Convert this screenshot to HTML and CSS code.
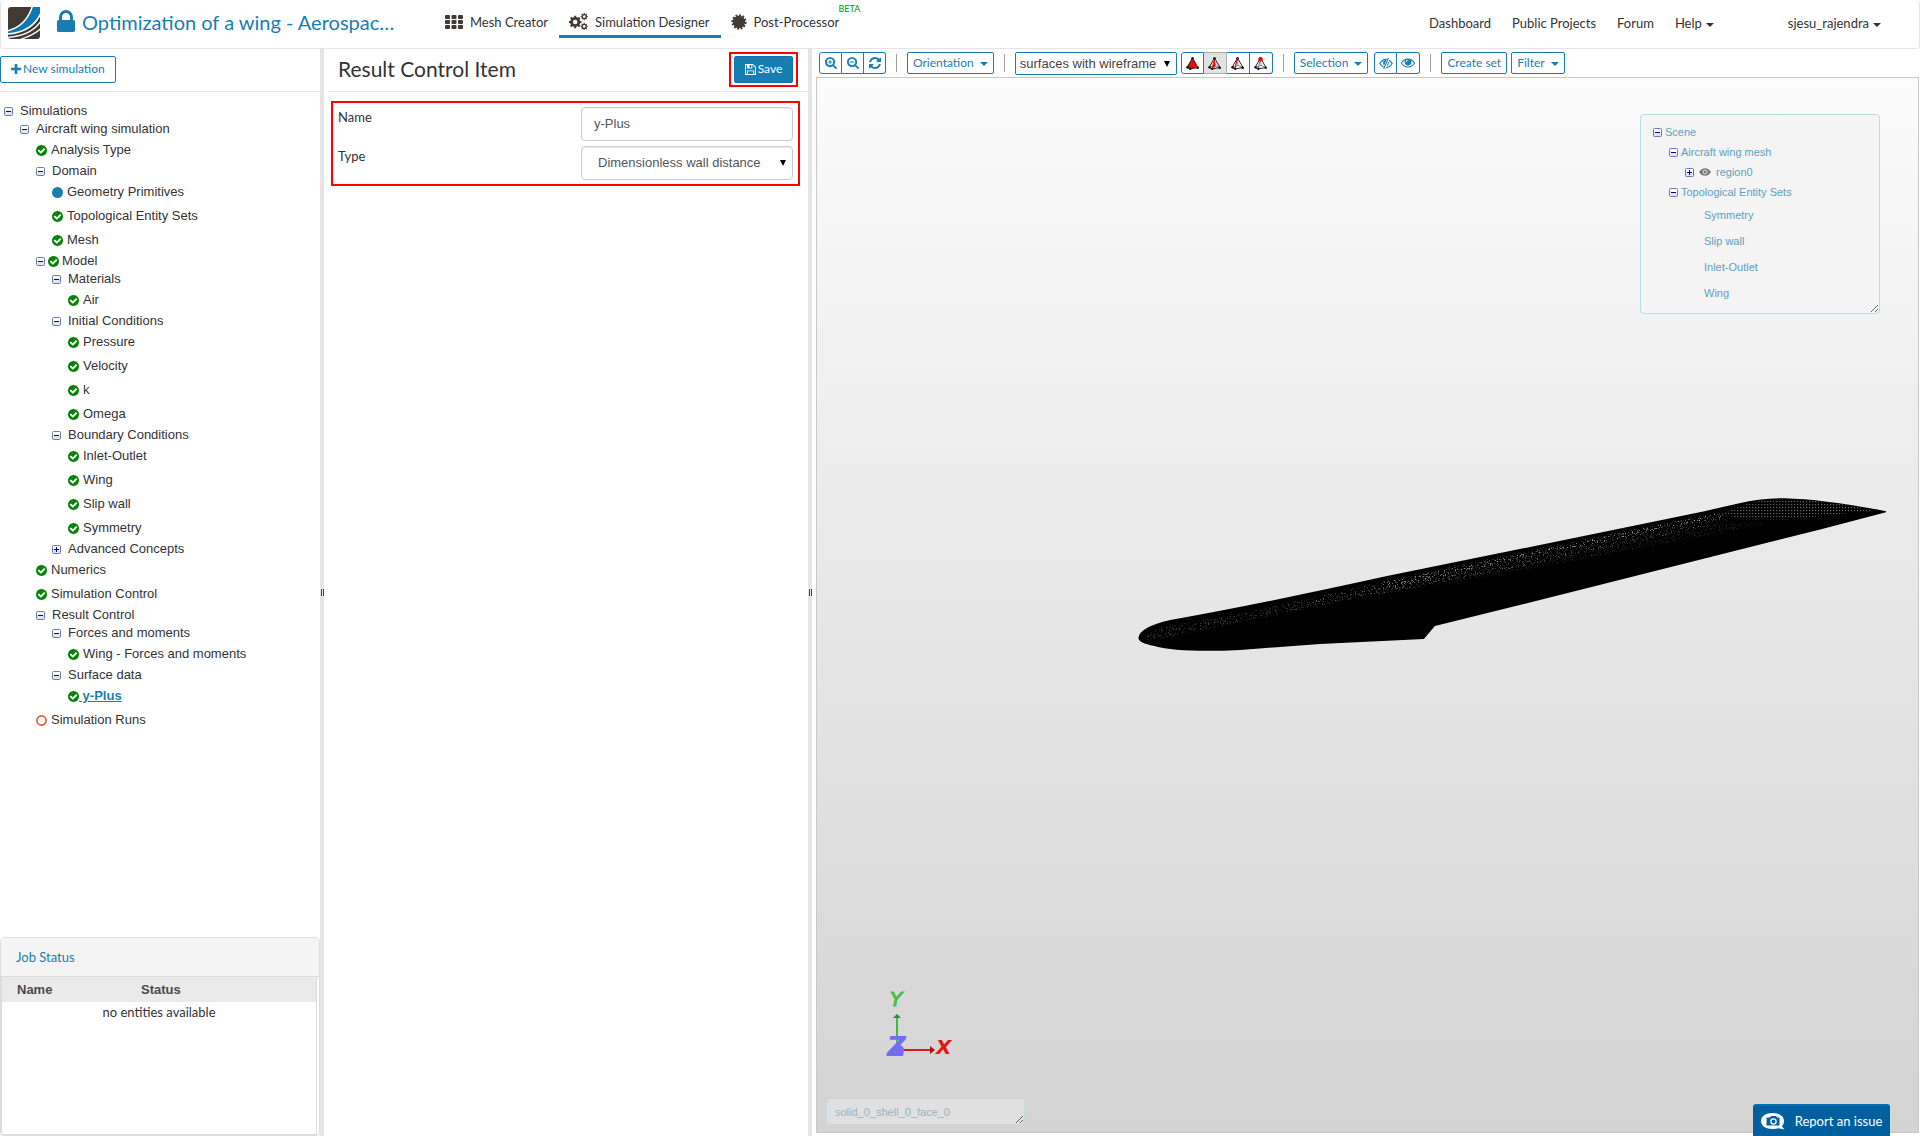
FILE: index.html
```html
<!DOCTYPE html>
<html lang="en">
<head>
<meta charset="utf-8">
<meta name="viewport" content="width=device-width, initial-scale=1">
<title>Simulation Designer</title>
<link rel="stylesheet" href="styles.css">
</head>
<body>
<svg class="defs" aria-hidden="true">
  <symbol id="plus" viewBox="192 128 1408 1408"><path d="M1600 736v192q0 40-28 68t-68 28h-416v416q0 40-28 68t-68 28h-192q-40 0-68-28t-28-68v-416h-416q-40 0-68-28t-28-68v-192q0-40 28-68t68-28h416v-416q0-40 28-68t68-28h192q40 0 68 28t28 68v416h416q40 0 68 28t28 68z"/></symbol>
  <symbol id="lock" viewBox="320 128 1152 1408"><path d="M640 768h512v-192q0-106-75-181t-181-75-181 75-75 181v192zm832 96v576q0 40-28 68t-68 28h-960q-40 0-68-28t-28-68v-576q0-40 28-68t68-28h32v-192q0-184 132-316t316-132 316 132 132 316v192h32q40 0 68 28t28 68z"/></symbol>
  <symbol id="zoom-in" viewBox="64 128 1664 1664"><path d="M1088 800v64q0 13-9.500 22.500t-22.500 9.500h-224v224q0 13-9.500 22.500t-22.500 9.500h-64q-13 0-22.500-9.500t-9.500-22.500v-224h-224q-13 0-22.500-9.500t-9.500-22.500v-64q0-13 9.500-22.500t22.500-9.500h224v-224q0-13 9.500-22.500t22.500-9.500h64q13 0 22.500 9.500t9.500 22.500v224h224q13 0 22.500 9.500t9.500 22.500zm128 32q0-185-131.500-316.500t-316.500-131.500-316.500 131.500-131.500 316.500 131.500 316.500 316.500 131.500 316.500-131.500 131.500-316.500zm512 832q0 53-37.500 90.500t-90.500 37.500q-54 0-90-38l-343-342q-179 124-399 124-143 0-273.500-55.500t-225-150-150-225-55.500-273.500 55.500-273.500 150-225 225-150 273.500-55.500 273.500 55.500 225 150 150 225 55.500 273.500q0 220-124 399l343 343q37 37 37 90z"/></symbol>
  <symbol id="zoom-out" viewBox="64 128 1664 1664"><path d="M1088 800v64q0 13-9.500 22.500t-22.500 9.500h-576q-13 0-22.500-9.500t-9.500-22.500v-64q0-13 9.500-22.500t22.500-9.500h576q13 0 22.500 9.500t9.500 22.500zm128 32q0-185-131.500-316.500t-316.500-131.500-316.500 131.500-131.500 316.500 131.500 316.500 316.500 131.500 316.500-131.500 131.500-316.500zm512 832q0 53-37.500 90.500t-90.500 37.500q-54 0-90-38l-343-342q-179 124-399 124-143 0-273.500-55.500t-225-150-150-225-55.500-273.500 55.500-273.500 150-225 225-150 273.500-55.500 273.500 55.500 225 150 150 225 55.500 273.500q0 220-124 399l343 343q37 37 37 90z"/></symbol>
  <symbol id="refresh" viewBox="128 128 1536 1536"><path d="M1639 1056q0 5-1 7-64 268-268 434.500t-478 166.500q-146 0-282.500-55t-243.500-157l-129 129q-19 19-45 19t-45-19-19-45v-448q0-26 19-45t45-19h448q26 0 45 19t19 45-19 45l-137 137q71 66 161 102t187 36q134 0 250-65t186-179q11-17 53-117 8-23 30-23h192q13 0 22.500 9.500t9.500 22.500zm25-800v448q0 26-19 45t-45 19h-448q-26 0-45-19t-19-45 19-45l138-138q-148-137-349-137-134 0-250 65t-186 179q-11 17-53 117-8 23-30 23h-199q-13 0-22.500-9.500t-9.500-22.500v-7q65-268 270-434.500t480-166.500q146 0 284 55.500t245 156.500l130-129q19-19 45-19t45 19 19 45z"/></symbol>
  <symbol id="check" viewBox="128 128 1536 1536"><path d="M1412 734q0-28-18-46l-91-90q-19-19-45-19t-45 19l-408 407-226-226q-19-19-45-19t-45 19l-91 90q-18 18-18 46 0 27 18 45l362 362q19 19 45 19 27 0 46-19l543-543q18-18 18-45zm252 162q0 209-103 385.500t-279.500 279.500-385.500 103-385.500-103-279.500-279.500-103-385.500 103-385.500 279.500-279.500 385.500-103 385.500 103 279.500 279.500 103 385.500z"/></symbol>
  <symbol id="dot" viewBox="0 0 12 12"><circle cx="6" cy="6" r="6"/></symbol>
  <symbol id="ring" viewBox="0 0 12 12"><circle cx="6" cy="6" r="5" fill="none" stroke="currentColor" stroke-width="1.800"/></symbol>
  <symbol id="eye" viewBox="0 384 1792 1152"><path d="M1664 960q-152-236-381-353 61 104 61 225 0 185-131.500 316.500t-316.500 131.500-316.500-131.500-131.500-316.500q0-121 61-225-229 117-381 353 133 205 333.500 326.500t434.500 121.500 434.500-121.500 333.500-326.500zm-720-384q0-20-14-34t-34-14q-125 0-214.500 89.500t-89.500 214.500q0 20 14 34t34 14 34-14 14-34q0-86 61-147t147-61q20 0 34-14t14-34zm848 384q0 34-20 69-140 230-376.500 368.500t-499.500 138.500-499.500-139-376.500-368q-20-35-20-69t20-69q140-229 376.500-368t499.500-139 499.500 139 376.500 368q20 35 20 69z"/></symbol>
  <symbol id="eye-solid" viewBox="0 0 14 9"><path d="M0 4.500Q3 0 7 0T14 4.500Q11 9 7 9T0 4.500Z"/><circle cx="7" cy="4.500" r="2.300" fill="none" stroke="#f4f4f4"/></symbol>
  <symbol id="eye-off" viewBox="0 0 14 11"><path d="M.8 5.500Q3.500 1.400 7 1.400T13.200 5.500Q10.500 9.600 7 9.600T.8 5.500Z" fill="none" stroke="currentColor" stroke-width="1.200"/><circle cx="7" cy="5" r="2.900"/><path d="M9.700 0 5 11" stroke="#fff" stroke-width="2.600"/><path d="M9.400 0 4.700 11" stroke="currentColor" stroke-width="1.100"/></symbol>
  <symbol id="save" viewBox="128 128 1536 1536"><path d="M512 1536h768v-384h-768v384zm896 0h128v-896q0-14-10-38.500t-20-34.500l-281-281q-10-10-34-20t-39-10v416q0 40-28 68t-68 28h-576q-40 0-68-28t-28-68v-416h-128v1280h128v-416q0-40 28-68t68-28h832q40 0 68 28t28 68v416zm-384-928v-320q0-13-9.500-22.500t-22.500-9.500h-192q-13 0-22.500 9.500t-9.500 22.500v320q0 13 9.500 22.500t22.500 9.500h192q13 0 22.500-9.500t9.500-22.500zm640 32v928q0 40-28 68t-68 28h-1344q-40 0-68-28t-28-68v-1344q0-40 28-68t68-28h928q40 0 88 20t76 48l280 280q28 28 48 76t20 88z"/></symbol>
  <symbol id="grid" viewBox="0 0 18 14"><g><rect width="5" height="4" rx="1"/><rect x="6.500" width="5" height="4" rx="1"/><rect x="13" width="5" height="4" rx="1"/><rect y="5" width="5" height="4" rx="1"/><rect x="6.500" y="5" width="5" height="4" rx="1"/><rect x="13" y="5" width="5" height="4" rx="1"/><rect y="10" width="5" height="4" rx="1"/><rect x="6.500" y="10" width="5" height="4" rx="1"/><rect x="13" y="10" width="5" height="4" rx="1"/></g></symbol>
  <symbol id="cogs" viewBox="0 0 19 17"><g fill="none" stroke="currentColor"><circle cx="6.200" cy="9" r="3.700" stroke-width="2.800"/><circle cx="6.200" cy="9" r="5.400" stroke-width="1.700" pathLength="16" stroke-dasharray="1 1" stroke-dashoffset=".5"/><circle cx="15.200" cy="3.600" r="2" stroke-width="1.400"/><circle cx="15.200" cy="3.600" r="3" stroke-width="1.200" pathLength="16" stroke-dasharray="1 1" stroke-dashoffset=".5"/><circle cx="15.200" cy="13.400" r="2" stroke-width="1.400"/><circle cx="15.200" cy="13.400" r="3" stroke-width="1.200" pathLength="16" stroke-dasharray="1 1" stroke-dashoffset=".5"/></g></symbol>
  <symbol id="burst" viewBox="0 0 16 16"><circle cx="8" cy="8" r="6.200"/><circle cx="8" cy="8" r="6.700" fill="none" stroke="currentColor" stroke-width="1.900" pathLength="24" stroke-dasharray="1.100 .9"/></symbol>
  <symbol id="tet" viewBox="0 0 13 13"><path d="M6.500 1 1 10.500 4 12 12 10.500Z" fill="none" stroke="#111" stroke-width=".9"/><path d="M6.500 1 4 12M1 10.500 7 8.500 12 10.500M6.500 1 7 8.500" fill="none" stroke="#555" stroke-width=".7"/><circle cx="1.600" cy="10.300" r="1.300"/><circle cx="4.300" cy="11.700" r="1.200"/><circle cx="11.700" cy="10.700" r="1.300"/><circle cx="6.500" cy="1.300" r="1.200"/></symbol>
  <symbol id="minus-box" viewBox="0 0 9 9"><rect x=".5" y=".5" width="8" height="8" rx="1" fill="#fff" stroke="#6b79b5"/><path d="M1 5h7v3H1z" fill="#e3e3ea"/><path d="M2 4h5v1H2z" fill="#00009c"/></symbol>
  <symbol id="plus-box" viewBox="0 0 9 9"><rect x=".5" y=".5" width="8" height="8" rx="1" fill="#fff" stroke="#6b79b5"/><path d="M1 5h7v3H1z" fill="#e3e3ea"/><path d="M2 4h5v1H2zM4 2h1v5H4z" fill="#00009c"/></symbol>
</svg>

<header class="topbar">
  <a class="logo" href="#" aria-label="Home">
    <svg viewBox="0 0 32 32"><clipPath id="logo-clip"><path d="M3 0H32V29Q32 32 29 32H3Q0 32 0 29V3Q0 0 3 0Z"/></clipPath><g clip-path="url(#logo-clip)"><path fill="#403934" d="M0 0h32v32H0z"/><path d="M24 0Q18 20 0 24V27Q24 25 33 6V0Z" fill="#0f78b4"/><g fill="none" stroke="#fff"><path d="M24.500-1Q18 19.500-1 24" stroke-width="1.500"/><path d="M33 6Q24 25.500-1 27" stroke-width="1.600"/><path d="M33 14Q23 29-1 30.500" stroke-width="1.300"/><path d="M33 21.500Q26 28 12 32.500" stroke-width="1.300"/></g></g></svg>
  </a>
  <a class="project" href="#"><svg class="lock"><use href="#lock"/></svg><span>Optimization of a wing - Aerospac…</span></a>
  <nav class="modes" aria-label="Workbench">
    <a href="#"><svg class="i-grid"><use href="#grid"/></svg>Mesh Creator</a>
    <a class="active" href="#" aria-current="page"><svg class="i-cogs"><use href="#cogs"/></svg>Simulation Designer</a>
    <a href="#"><svg class="i-burst"><use href="#burst"/></svg>Post-Processor<span class="beta">BETA</span></a>
  </nav>
  <nav class="links" aria-label="Site">
    <a href="#">Dashboard</a>
    <a href="#">Public Projects</a>
    <a href="#">Forum</a>
    <a href="#">Help<i class="caret"></i></a>
    <a class="user" href="#">sjesu_rajendra<i class="caret"></i></a>
  </nav>
</header>

<main class="workspace">
  <aside class="sidebar">
    <div class="bar"><button class="btn new" type="button"><svg class="i-plus"><use href="#plus"/></svg>New simulation</button></div>
    <ul class="tree">
      <li><div class="row"><svg class="tog"><use href="#minus-box"/></svg>Simulations</div>
        <ul>
          <li><div class="row"><svg class="tog"><use href="#minus-box"/></svg>Aircraft wing simulation</div>
            <ul>
              <li class="leaf"><svg class="st"><use href="#check"/></svg>Analysis Type</li>
              <li><div class="row"><svg class="tog"><use href="#minus-box"/></svg>Domain</div>
                <ul>
                  <li class="leaf"><svg class="st blue"><use href="#dot"/></svg>Geometry Primitives</li>
                  <li class="leaf"><svg class="st"><use href="#check"/></svg>Topological Entity Sets</li>
                  <li class="leaf"><svg class="st"><use href="#check"/></svg>Mesh</li>
                </ul></li>
              <li><div class="row model"><svg class="tog"><use href="#minus-box"/></svg><svg class="st"><use href="#check"/></svg>Model</div>
                <ul>
                  <li><div class="row"><svg class="tog"><use href="#minus-box"/></svg>Materials</div>
                    <ul><li class="leaf"><svg class="st"><use href="#check"/></svg>Air</li></ul></li>
                  <li><div class="row"><svg class="tog"><use href="#minus-box"/></svg>Initial Conditions</div>
                    <ul>
                      <li class="leaf"><svg class="st"><use href="#check"/></svg>Pressure</li>
                      <li class="leaf"><svg class="st"><use href="#check"/></svg>Velocity</li>
                      <li class="leaf"><svg class="st"><use href="#check"/></svg>k</li>
                      <li class="leaf"><svg class="st"><use href="#check"/></svg>Omega</li>
                    </ul></li>
                  <li><div class="row"><svg class="tog"><use href="#minus-box"/></svg>Boundary Conditions</div>
                    <ul>
                      <li class="leaf"><svg class="st"><use href="#check"/></svg>Inlet-Outlet</li>
                      <li class="leaf"><svg class="st"><use href="#check"/></svg>Wing</li>
                      <li class="leaf"><svg class="st"><use href="#check"/></svg>Slip wall</li>
                      <li class="leaf"><svg class="st"><use href="#check"/></svg>Symmetry</li>
                    </ul></li>
                  <li><div class="row"><svg class="tog"><use href="#plus-box"/></svg>Advanced Concepts</div></li>
                </ul></li>
              <li class="leaf"><svg class="st"><use href="#check"/></svg>Numerics</li>
              <li class="leaf"><svg class="st"><use href="#check"/></svg>Simulation Control</li>
              <li><div class="row"><svg class="tog"><use href="#minus-box"/></svg>Result Control</div>
                <ul>
                  <li><div class="row"><svg class="tog"><use href="#minus-box"/></svg>Forces and moments</div>
                    <ul><li class="leaf"><svg class="st"><use href="#check"/></svg>Wing - Forces and moments</li></ul></li>
                  <li><div class="row"><svg class="tog"><use href="#minus-box"/></svg>Surface data</div>
                    <ul><li class="leaf selected"><svg class="st"><use href="#check"/></svg><a class="current" href="#">&nbsp;y-Plus</a></li></ul></li>
                </ul></li>
              <li class="leaf"><svg class="st orange"><use href="#ring"/></svg>Simulation Runs</li>
            </ul></li>
        </ul></li>
    </ul>
    <section class="jobs">
      <h2>Job Status</h2>
      <div class="jobs-body">
        <table>
          <thead><tr><th>Name</th><th>Status</th></tr></thead>
          <tbody><tr><td colspan="2">no entities available</td></tr></tbody>
        </table>
      </div>
    </section>
  </aside>
  <div class="splitter"><i></i></div>

  <section class="panel">
    <div class="bar title">
      <h1>Result Control Item</h1>
      <div class="mark"><button class="save" type="submit" form="item"><svg class="i-save"><use href="#save"/></svg>Save</button></div>
    </div>
    <form class="mark fields" id="item">
      <label for="name">Name</label>
      <input id="name" type="text" value="y-Plus">
      <label for="type">Type</label>
      <div class="pick"><select id="type"><option>Dimensionless wall distance</option></select></div>
    </form>
  </section>
  <div class="splitter"><i></i></div>

  <section class="viewer">
    <div class="toolbar">
      <div class="group">
        <button type="button" aria-label="Zoom in"><svg><use href="#zoom-in"/></svg></button>
        <button type="button" aria-label="Zoom out"><svg><use href="#zoom-out"/></svg></button>
        <button type="button" aria-label="Reset view"><svg><use href="#refresh"/></svg></button>
      </div>
      <span class="sep"></span>
      <button class="btn small" type="button">Orientation<i class="caret"></i></button>
      <span class="sep"></span>
      <div class="modeset">
        <div class="pick render"><select aria-label="Render mode"><option>surfaces with wireframe</option></select></div>
        <div class="group tets">
          <button type="button" aria-label="Pick volumes"><svg viewBox="0 0 13 13"><path d="M6.500 1 1 10.500 4 12 12 10.500Z" fill="red"/><use href="#tet"/><path d="M6.500 2 4.500 11.500 11.500 10.500Z" fill="red"/></svg></button>
          <button class="on" type="button" aria-label="Pick faces"><svg viewBox="0 0 13 13"><use href="#tet"/><path d="M6.500 1.500 4 12 7.500 9.500Z" fill="red"/></svg></button>
          <button type="button" aria-label="Pick edges"><svg viewBox="0 0 13 13"><use href="#tet"/><path d="M6.500 1 4 11" stroke="red" fill="none"/></svg></button>
          <button type="button" aria-label="Pick nodes"><svg viewBox="0 0 13 13"><use href="#tet"/><circle cx="6.500" cy="2.200" r="2.200" fill="red"/></svg></button>
        </div>
      </div>
      <span class="sep"></span>
      <div class="modeset wide">
        <button class="btn small" type="button">Selection<i class="caret"></i></button>
        <div class="group eyes">
          <button type="button" aria-label="Hide selection"><svg><use href="#eye-off"/></svg></button>
          <button type="button" aria-label="Show selection"><svg><use href="#eye"/></svg></button>
        </div>
      </div>
      <span class="sep"></span>
      <div class="modeset">
        <button class="btn small" type="button">Create set</button>
        <button class="btn small" type="button">Filter<i class="caret"></i></button>
      </div>
    </div>

    <div class="canvas">
      <svg class="wing" viewBox="816 78 1103 1056" role="img" aria-label="Wing mesh">
        <defs>
          <filter id="grain" x="0" y="0" width="1" height="1"><feTurbulence type="fractalNoise" baseFrequency=".85" numOctaves="2" seed="4"/><feColorMatrix values="0 0 0 0 .46  0 0 0 0 .54  0 0 0 0 .55  5 0 0 0 -2.700"/><feComposite in2="SourceGraphic" operator="in"/></filter>
          <pattern id="mesh" width="3" height="3" patternUnits="userSpaceOnUse"><path d="M1 1h1v1H1z" fill="#8b9b97"/></pattern>
        </defs>
        <path d="M1138 639Q1139 628 1170 621Q1260 605 1387 577L1520 550L1705 512L1740 504Q1760 499 1785 499Q1825 500 1887 512V513L1822 530L1520 606L1435 627L1424 640L1320 645L1240 651Q1180 654 1154 647Q1138 644 1138 639Z"/>
        <path filter="url(#grain)" opacity=".35" d="M1141 639L1160 628L1240 615L1380 583L1520 553L1715 514L1730 522L1520 568L1380 595L1250 621L1150 642Z"/>
        <path filter="url(#grain)" opacity=".6" d="M1380 584L1520 555L1722 513L1728 517L1520 560L1385 590Z"/>
        <path filter="url(#grain)" opacity=".2" d="M1300 604L1520 562L1720 524L1770 524L1520 572L1340 602Z"/>
        <path fill="url(#mesh)" d="M1725 514Q1748 502 1772 500Q1820 499 1874 511L1820 517L1790 520H1738Z"/>
      </svg>

      <svg class="axes" viewBox="0 0 70 80" role="img" aria-label="Axes">
        <path d="M14 32V60" stroke="#3fb83f" stroke-width="2"/><path d="m14 29-4 4h8z" fill="#36863c"/>
        <path d="M17 65H48" stroke="#e01818" stroke-width="2"/><path d="m52 65-5-4v8z" fill="#a81414"/>
        <circle cx="16" cy="65" r="5" fill="#6f6ff0"/>
        <text x="7" y="21" class="ax y">Y</text><text x="53" y="69" class="ax x">X</text><text x="4" y="71" class="ax z">Z</text>
      </svg>

      <div class="scene">
        <ul>
          <li><svg class="tog"><use href="#minus-box"/></svg>Scene</li>
          <li class="d1"><svg class="tog"><use href="#minus-box"/></svg>Aircraft wing mesh</li>
          <li class="d2"><svg class="tog"><use href="#plus-box"/></svg><svg class="eye"><use href="#eye-solid"/></svg>region0</li>
          <li class="d1"><svg class="tog"><use href="#minus-box"/></svg>Topological Entity Sets</li>
          <li class="set">Symmetry</li>
          <li class="set">Slip wall</li>
          <li class="set">Inlet-Outlet</li>
          <li class="set">Wing</li>
        </ul>
      </div>
      <textarea class="picked" aria-label="Picked entity" readonly>solid_0_shell_0_face_0</textarea>
    </div>
  </section>
</main>

<button class="report" type="button">
  <svg viewBox="0 0 24 17"><path d="M11.500 0C18 0 23 3.200 23 8c0 2.200-.9 4-2.200 5.300L23.500 16.500 17.500 15.300C15.700 15.900 13.700 16 11.500 16 5 16 0 13 0 8S5 0 11.500 0Z" fill="#fff"/><path d="M5.500 4.500H9L10 3h5l1 1.500h2.500v8h-13z" fill="#00609f"/><circle cx="12.500" cy="8.500" r="2.600" fill="none" stroke="#fff" stroke-width="1.300"/></svg>
  Report an issue
</button>
</body>
</html>
```
FILE: styles.css
```css
:root {
  --blue: #187eb1;
  --ink: #333;
  --line: #e5e5e5;
  --sans: "Liberation Sans", Arial, sans-serif;
}

* { box-sizing: border-box; }

body {
  display: flex;
  flex-direction: column;
  min-height: 100vh;
  margin: 0;
  background: #fff;
  color: var(--ink);
  font: 13px/20px Lato, sans-serif;
}

a { color: inherit; text-decoration: none; }
ul { margin: 0; padding: 0; list-style: none; }
h1, h2 { margin: 0; font-weight: 400; }
svg { display: block; flex: none; fill: currentColor; }
button, input, select, textarea { margin: 0; font: inherit; }
button { display: flex; align-items: center; justify-content: center; cursor: pointer; }
.defs { position: absolute; width: 0; height: 0; }

.caret {
  flex: none;
  display: inline-block;
  margin-left: 4px;
  border: 4px solid transparent;
  border-top-color: currentColor;
  border-bottom: 0;
  vertical-align: middle;
}

/* Top bar */
.topbar {
  display: flex;
  align-items: center;
  height: 49px;
  padding: 0 38px 2px 7px;
  border: 1px solid var(--line);
  border-top: 0;
  border-radius: 4px;
}
.logo svg { width: 32px; height: 32px; }
.project {
  display: flex;
  align-items: center;
  gap: 7px;
  width: 388px;
  margin-left: 17px;
  color: var(--blue);
  font-size: 20px;
  line-height: 24px;
}
.project span { padding-bottom: 2px; }
.lock { width: 18px; height: 22px; margin-bottom: 4px; }
.modes { display: flex; }
.modes a {
  position: relative;
  display: flex;
  align-items: center;
  gap: 7px;
  height: 29px;
  padding: 0 11px 0 10px;
  border-bottom: 3px solid transparent;
}
.modes a:first-child { padding-left: 0; }
.modes .active { border-color: var(--blue); }
.modes svg { color: #403934; }
.i-grid { width: 18px; height: 14px; }
.i-cogs { width: 19px; height: 17px; }
.i-burst { width: 16px; height: 16px; }
.beta {
  position: absolute;
  top: -6px;
  right: -10px;
  color: #090;
  font-size: 9px;
  line-height: 12px;
}
.links { display: flex; gap: 21px; margin-left: auto; }
.links .user { margin-left: 53px; }

/* Columns */
.workspace { display: flex; flex: 1; min-height: 0; }
.sidebar { display: flex; flex-direction: column; width: 320px; flex: none; }
.splitter {
  display: flex;
  align-items: center;
  flex: none;
  width: 4px;
  margin-right: 4px;
  background: var(--line);
}
.splitter i { width: 3px; height: 7px; margin-left: 1px; border: solid #444; border-width: 0 1px; }
.panel { width: 480px; flex: none; }
.viewer { display: flex; flex-direction: column; flex: 1; min-width: 0; padding: 0 1px 3px 0; }

.bar { display: flex; align-items: center; height: 43px; padding-bottom: 2px; border-bottom: 1px solid var(--line); }
.btn {
  height: 27px;
  padding: 0 10px;
  border: 1px solid var(--blue);
  border-radius: 2px;
  background: #fff;
  color: var(--blue);
  font-size: 12px;
}
.i-plus { width: 10px; height: 10px; margin-right: 2px; }

/* Simulation tree */
.tree { padding-top: 10px; font: 13px/18px var(--sans); }
.tree ul { padding-left: 16px; }
.tree > li { padding-left: 4px; }
.row { display: flex; align-items: center; gap: 7px; height: 18px; }
.row.model { gap: 3px; }
.tog { width: 9px; height: 9px; }
.leaf { display: flex; align-items: center; gap: 4px; height: 24px; }
.leaf.selected { gap: 0; }
.st { width: 11px; height: 11px; color: #058505; }
.st.blue { color: var(--blue); }
.st.orange { color: #e0592a; }
.current { color: var(--blue); font-weight: 700; text-decoration: underline; }

/* Job status */
.jobs { height: 199px; margin-top: auto; border: 1px solid #ddd; border-radius: 4px; }
.jobs h2 {
  height: 39px;
  padding: 0 15px;
  border-bottom: 1px solid #ddd;
  background: #f4f4f4;
  color: var(--blue);
  font-size: 13px;
  line-height: 38px;
}
.jobs-body { height: 158px; margin-right: 2px; border: 1px solid #ddd; border-top: 0; }
.jobs table { width: 100%; border-collapse: collapse; }
.jobs th {
  height: 25px;
  padding: 0 0 0 15px;
  background: #eaeaea;
  color: #4a4a4a;
  font: 700 13px/20px var(--sans);
  text-align: left;
}
.jobs th:first-child { width: 124px; }
.jobs td { padding: 0; text-align: center; }

/* Item form */
.title { justify-content: space-between; padding: 0 10px 2px 10px; }
.title h1 { font-size: 21px; line-height: 28px; }
.mark { border: 2px solid red; }
.title .mark { padding: 2px 3px; }
.save {
  width: 59px;
  height: 27px;
  padding: 0;
  gap: 2px;
  border: 1px solid #1273a4;
  border-radius: 2px;
  background: var(--blue);
  color: #fff;
  font-size: 12px;
}
.i-save { width: 11px; height: 11px; }
.fields {
  display: grid;
  grid-template-columns: 1fr 212px;
  row-gap: 5px;
  margin: 9px 8px 0 3px;
  padding: 4px 5px;
}
.fields input, .fields select {
  width: 100%;
  height: 34px;
  padding: 0 12px 2px;
  border: 1px solid #ccc;
  border-radius: 4px;
  background: #fff;
  box-shadow: inset 0 1px 1px rgb(0 0 0 / 8%);
  color: #555;
  font: 13px/20px var(--sans);
}
.fields select { padding: 0 16px; }
.pick { position: relative; }
.pick select { appearance: none; display: block; }
.pick::after {
  content: "";
  position: absolute;
  top: 40%;
  right: 7px;
  border: 3px solid transparent;
  border-top: 6px solid #000;
  border-bottom: 0;
}

/* Viewer toolbar */
.toolbar { display: flex; align-items: flex-start; gap: 10px; height: 28px; padding: 3px 3px 0; }
.small { height: 22px; padding: 0 5px; }
.small .caret { margin: 2px 0 0 6px; }
.group { display: flex; }
.group button {
  width: 22px;
  height: 22px;
  padding: 0;
  border: 1px solid var(--blue);
  background: #fff;
  color: var(--blue);
}
.group button + button { border-left: 0; }
.group button:first-child { width: 23px; border-radius: 3px 0 0 3px; }
.group button:last-child { border-radius: 0 3px 3px 0; }
.group svg { width: 12px; height: 12px; }
.group.tets button, .group.eyes button { width: 23px; }
.tets button { color: #111; }
.tets svg { width: 13px; height: 13px; fill: #111; }
.tets .on { border-color: #adadad; background: #e2e2e2; }
.eyes svg { width: 14px; height: 11px; }
.eyes button + button svg { height: 10px; }
.sep { width: 1px; height: 18px; margin-top: 2px; background: #a59f9a; }
.modeset { display: flex; gap: 4px; }
.modeset.wide { gap: 6px; }
.render select {
  width: 162px;
  height: 23px;
  padding: 0 4px;
  border: 1px solid var(--blue);
  border-radius: 2px;
  background: #fff;
  color: #444;
  font: 13px/20px var(--sans);
}

/* 3D view */
.canvas {
  position: relative;
  flex: 1;
  border: 1px solid #c8c8c8;
  background: linear-gradient(#fbfbfb, #d3d3d3);
}
.wing { position: absolute; inset: 0; width: 100%; height: 100%; fill: #000; }
.axes { position: absolute; left: 66px; bottom: 67px; width: 70px; height: 80px; }
.ax { font: italic 700 20px "DejaVu Sans", sans-serif; }
.ax.x { fill: #e01818; }
.ax.y { fill: #48bd48; font-weight: 400; stroke: #48bd48; }
.ax.z { fill: #6f6ff0; font-size: 26px; }

.scene {
  position: absolute;
  top: 36px;
  right: 38px;
  width: 240px;
  height: 200px;
  padding: 7px 12px;
  overflow: hidden;
  resize: both;
  border: 1px solid #b5dde7;
  border-radius: 4px;
  background: #f4f4f4;
  color: #609fbf;
  font: 11px/20px var(--sans);
}
.scene li { display: flex; align-items: center; gap: 3px; height: 20px; }
.scene .d1 { padding-left: 16px; }
.scene .d2 { padding-left: 32px; }
.scene .set { height: 26px; padding-left: 51px; }
.scene .eye { width: 12px; height: 8px; margin: 0 2px; color: #777; }
.picked {
  position: absolute;
  left: 9px;
  bottom: 7px;
  width: 199px;
  height: 27px;
  padding: 3px 8px;
  overflow: hidden;
  resize: both;
  border: 1px solid #c5d8df;
  border-radius: 4px;
  background: #e0e0e0;
  color: #97b4c3;
  font: 11px/20px var(--sans);
}

.report {
  position: fixed;
  right: 30px;
  bottom: 0;
  width: 137px;
  height: 32px;
  padding: 0;
  gap: 10px;
  border: 0;
  border-top: 2px solid #0071b5;
  border-radius: 3px 3px 0 0;
  background: #00609f;
  color: #fff;
  font-size: 13px;
}
.report svg { width: 24px; height: 17px; }
```
